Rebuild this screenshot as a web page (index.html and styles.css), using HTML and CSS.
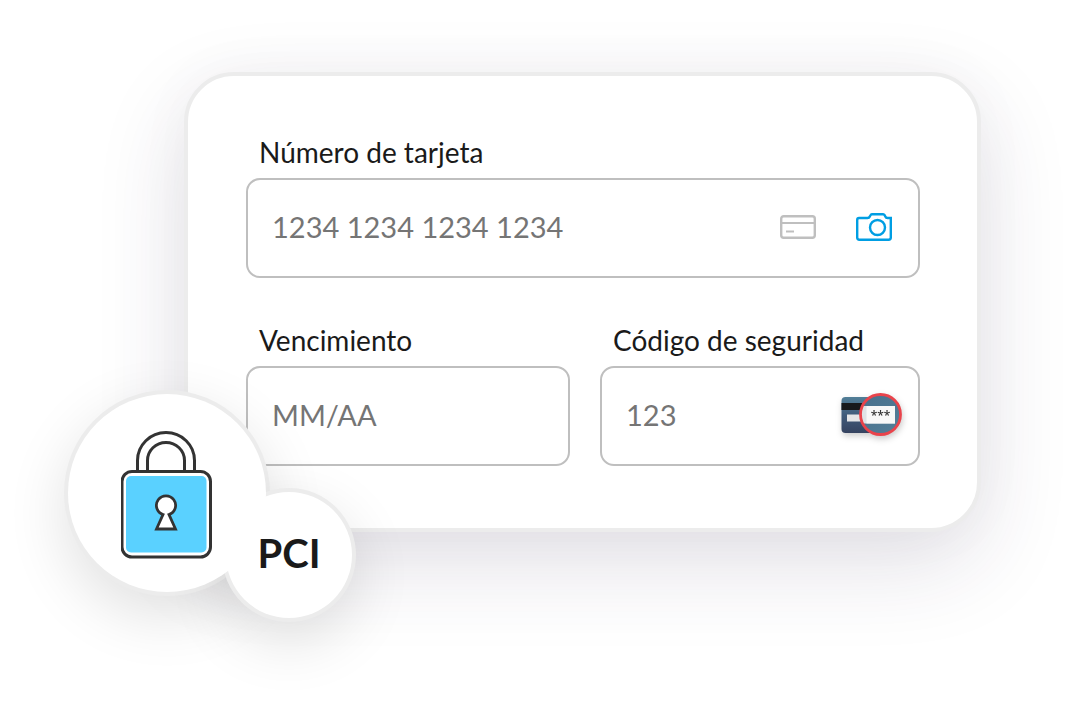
FILE: index.html
```html
<!DOCTYPE html>
<html lang="es">
<head>
<meta charset="utf-8">
<meta name="viewport" content="width=device-width, initial-scale=1">
<title>Pago con tarjeta</title>
<link rel="stylesheet" href="styles.css">
</head>
<body>
<main class="stage">
  <form class="card">
    <div class="field field-wide">
      <label class="label" for="number">Número de tarjeta</label>
      <div class="box">
        <input class="input" id="number" type="text" inputmode="numeric" placeholder="1234 1234 1234 1234">
        <svg class="icon-card" viewBox="0 0 36 26" aria-hidden="true">
          <rect x="1.200" y="2.200" width="33.600" height="21.600" rx="2.500" fill="none" stroke="#bfbfbf" stroke-width="2.400"/>
          <path d="M1 9h34M6 17.500h8" fill="none" stroke="#bfbfbf" stroke-width="2.200"/>
        </svg>
        <button class="camera" type="button" aria-label="Escanear tarjeta">
          <svg class="icon-camera" viewBox="0 0 36 30" aria-hidden="true">
            <path d="M3 6h8.500c1.400 0 1.900-.5 2.300-1.500l.7-1.300c.3-.7.7-1 1.400-1h11.200c.8 0 1.100.3 1.500 1l.7 1.300c.4 1 .9 1.500 2.300 1.500H34.800v19.500c0 1.500-.7 2.200-2.200 2.200H3.400c-1.500 0-2.200-.7-2.200-2.200V8c0-1.400.5-2 1.800-2Z" fill="none" stroke="#009ee3" stroke-width="2.400"/>
            <circle cx="21.500" cy="15.500" r="7.500" fill="none" stroke="#009ee3" stroke-width="2.400"/>
          </svg>
        </button>
      </div>
    </div>
    <div class="field">
      <label class="label" for="expiry">Vencimiento</label>
      <div class="box">
        <input class="input" id="expiry" type="text" placeholder="MM/AA">
      </div>
    </div>
    <div class="field">
      <label class="label" for="code">Código de seguridad</label>
      <div class="box box-code">
        <input class="input" id="code" type="text" inputmode="numeric" placeholder="123">
        <svg class="icon-code" viewBox="0 0 62 44" aria-hidden="true">
          <defs>
            <linearGradient id="plastic" x1="0" y1="0" x2="0" y2="1">
              <stop offset="0" stop-color="#527f98"/>
              <stop offset=".5" stop-color="#405b7b"/>
              <stop offset="1" stop-color="#354360"/>
            </linearGradient>
            <linearGradient id="lens" x1="0" y1="0" x2="1" y2="1">
              <stop offset="0" stop-color="#476f8c"/>
              <stop offset="1" stop-color="#547f98"/>
            </linearGradient>
            <clipPath id="lens-clip"><circle cx="40.500" cy="21.500" r="20"/></clipPath>
          </defs>
          <rect x="1.500" y="4" width="50" height="36" rx="4" fill="url(#plastic)"/>
          <path d="M1.500 10h42v7h-42z" fill="#17191c"/>
          <path d="M7 21.500h22v7H7z" fill="#e4e5e7"/>
          <circle cx="40.500" cy="21.500" r="20" fill="url(#lens)"/>
          <g clip-path="url(#lens-clip)">
            <path d="M18 13h37v17.500H18z" fill="#dfe3e6"/>
            <path d="M26.500 13H55v17.500H26.500z" fill="#f8f8f8"/>
          </g>
          <text class="stars" x="40.500" y="27" text-anchor="middle">***</text>
          <circle cx="40.500" cy="21.500" r="20" fill="none" stroke="#e9434b" stroke-width="2.800"/>
        </svg>
      </div>
    </div>
    <div class="badges">
      <div class="badge badge-lock">
        <svg class="icon-lock" viewBox="0 0 92 128" role="img" aria-label="Candado">
          <g fill="none" stroke="#333" stroke-width="3">
            <path d="M16.500 41V29.500a28.500 28 0 0 1 57 0V41"/>
            <path d="M26.500 41V29.500a18.500 18 0 0 1 37 0V41"/>
            <rect x="1" y="40.500" width="88.500" height="85.500" rx="10" fill="#fff"/>
          </g>
          <rect x="5" y="45" width="80.500" height="76.500" rx="5" fill="#5ad1ff"/>
          <path d="M42 83.500a9.600 9.600 0 1 1 6 0L54.500 98h-19Z" fill="#fff" stroke="#333" stroke-width="2.800"/>
        </svg>
      </div>
      <div class="badge badge-pci">PCI</div>
    </div>
  </form>
</main>
</body>
</html>
```
FILE: styles.css
```css
* {
  box-sizing: border-box;
}

body {
  margin: 0;
  background: #fff;
  color: #1a1a1a;
  font-family: Lato, "Liberation Sans", sans-serif;
}

.stage {
  min-height: 100vh;
  padding: 72px 109px 160px 184px;
  overflow: hidden;
}

.card {
  position: relative;
  display: grid;
  grid-template-columns: 81fr 80fr;
  gap: 46px 30px;
  padding: 60px 57px 62px 58px;
  border: 4px solid #ececec;
  border-radius: 50px;
  background: #fff;
  box-shadow: 0 32px 90px rgba(50, 35, 80, 0.14), 0 0 60px rgba(0, 0, 0, 0.03);
}

.field {
  display: flex;
  flex-direction: column;
  gap: 10px;
  min-width: 0;
}

.field-wide {
  grid-column: 1 / -1;
}

.label {
  padding-left: 13px;
  font-size: 28px;
  line-height: 32px;
}

.box {
  display: flex;
  align-items: center;
  height: 100px;
  padding: 0 26px 2px 24px;
  border: 2px solid #bfbfbf;
  border-radius: 14px;
}

.box-code {
  padding-right: 16px;
}

.input {
  flex: 1;
  min-width: 0;
  padding: 0;
  border: 0;
  outline: 0;
  background: transparent;
  color: #333;
  font: inherit;
  font-size: 29px;
  line-height: 40px;
}

.input::placeholder {
  color: #757575;
  opacity: 1;
}

.camera {
  display: flex;
  margin-left: 40px;
  padding: 0;
  border: 0;
  background: transparent;
  cursor: pointer;
}

.icon-card {
  width: 36px;
  height: 26px;
}

.icon-camera {
  width: 36px;
  height: 30px;
}

.icon-code {
  width: 62px;
  height: 44px;
  overflow: visible;
  filter: drop-shadow(1px 3px 3px rgba(0, 0, 0, 0.2));
}

.stars {
  fill: #333;
  font-family: "Open Sans", sans-serif;
  font-size: 12px;
  font-weight: 600;
}

/* Both rings sit below both white discs, so the badges merge where they touch. */
.badges {
  position: absolute;
  left: -120px;
  bottom: -90px;
  display: flex;
  align-items: flex-end;
  isolation: isolate;
}

.badge {
  position: relative;
  display: flex;
  align-items: center;
  justify-content: center;
  border-radius: 50%;
  background: #fff;
}

.badge::before {
  content: "";
  position: absolute;
  inset: -4px;
  z-index: -1;
  border-radius: 50%;
  background: #ececec;
  box-shadow: 0 20px 60px rgba(0, 0, 0, 0.12);
}

.badge-lock {
  width: 198px;
  height: 198px;
  margin-bottom: 26px;
  padding-top: 4px;
}

.badge-pci {
  width: 126px;
  height: 126px;
  margin-left: -40px;
  padding-bottom: 4px;
  font-size: 40px;
  font-weight: 700;
  line-height: 48px;
}

.icon-lock {
  width: 92px;
  height: 128px;
}
```
